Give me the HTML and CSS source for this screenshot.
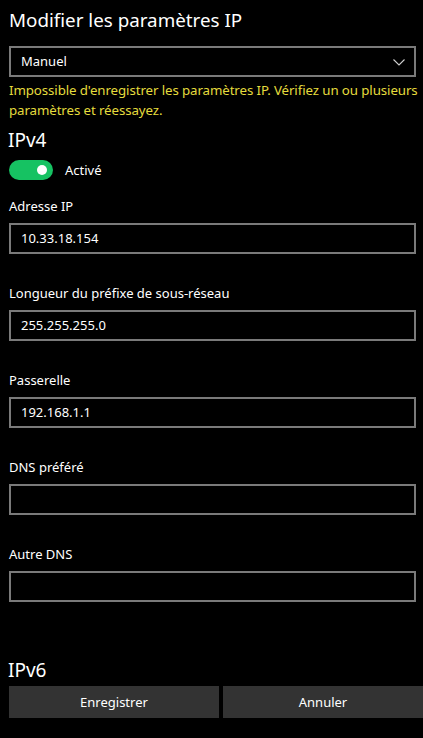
FILE: index.html
```html
<!DOCTYPE html>
<html lang="fr">
<head>
<meta charset="utf-8">
<link rel="stylesheet" href="styles.css">
</head>
<body>
<div class="page">
  <h1 class="title">Modifier les paramètres IP</h1>
  <div class="select">
    <span>Manuel</span>
    <svg class="chev" width="12" height="7" viewBox="0 0 12 7"><path d="M0.5 0.5 L6 6 L11.5 0.5" fill="none" stroke="#cfcfcf" stroke-width="1.1"/></svg>
  </div>
  <p class="error">Impossible d'enregistrer les paramètres IP. Vérifiez un ou plusieurs paramètres et réessayez.</p>
  <h2 class="section">IPv4</h2>
  <div class="toggle-row">
    <div class="toggle"><div class="knob"></div></div>
    <span>Activé</span>
  </div>
  <div class="field">
    <div class="label">Adresse IP</div>
    <div class="input">10.33.18.154</div>
  </div>
  <div class="field">
    <div class="label">Longueur du préfixe de sous-réseau</div>
    <div class="input">255.255.255.0</div>
  </div>
  <div class="field">
    <div class="label">Passerelle</div>
    <div class="input">192.168.1.1</div>
  </div>
  <div class="field">
    <div class="label">DNS préféré</div>
    <div class="input"></div>
  </div>
  <div class="field">
    <div class="label">Autre DNS</div>
    <div class="input"></div>
  </div>
  <h2 class="section v6">IPv6</h2>
  <div class="buttons">
    <div class="btn">Enregistrer</div>
    <div class="btn">Annuler</div>
  </div>
</div>
</body>
</html>
```
FILE: styles.css
```css
html, body {
  margin: 0;
  padding: 0;
  background: #000;
  color: #fff;
  font-family: "Noto Sans", "Open Sans", sans-serif;
  font-size: 13px;
}
.page {
  width: 423px;
  height: 738px;
  overflow: hidden;
  padding-left: 9px;
  box-sizing: border-box;
}
.title {
  margin: 0;
  padding-top: 6px;
  font-size: 18.8px;
  font-weight: 400;
  line-height: 28px;
  height: 40px;
}
.select {
  width: 407px;
  height: 31px;
  box-sizing: border-box;
  border: 2px solid #7a7a7a;
  display: flex;
  align-items: center;
  justify-content: space-between;
  padding: 0 9px 0 10px;
}
.select span { line-height: 1; }
.chev { margin-top: 1px; }
.error {
  margin: 0;
  padding-top: 3px;
  color: #e5dc3d;
  line-height: 20px;
  width: 410px;
  font-size: 13.3px;
  letter-spacing: -0.1px;
}
.section {
  margin: 0;
  font-size: 19px;
  font-weight: 400;
  line-height: 26px;
  height: 28px;
  padding-top: 7px;
  margin-left: -1px;
}
.toggle-row {
  display: flex;
  align-items: center;
  gap: 12px;
  height: 20px;
  margin-top: 5px;
}
.toggle {
  width: 44px;
  height: 20px;
  border-radius: 10px;
  background: #16c262;
  display: flex;
  align-items: center;
  justify-content: flex-end;
  padding-right: 6px;
  box-sizing: border-box;
}
.knob {
  width: 10px;
  height: 10px;
  border-radius: 50%;
  background: #fff;
}
.field {
  display: flex;
  flex-direction: column;
  height: 87px;
}
.label {
  height: 20px;
  line-height: 20px;
  margin-top: 16px;
  margin-bottom: 7px;
}
.input {
  width: 407px;
  height: 31px;
  box-sizing: border-box;
  border: 2px solid #7a7a7a;
  padding: 0 10px;
  line-height: 27px;
}
.v6 {
  margin-top: 42px;
  padding-top: 0;
  height: 27px;
  line-height: 26px;
}
.buttons {
  display: flex;
  gap: 4px;
  margin-top: 2px;
}
.btn {
  height: 32px;
  line-height: 32px;
  background: #333;
  text-align: center;
  width: 210px;
}
.btn + .btn { width: 200px; }
```
